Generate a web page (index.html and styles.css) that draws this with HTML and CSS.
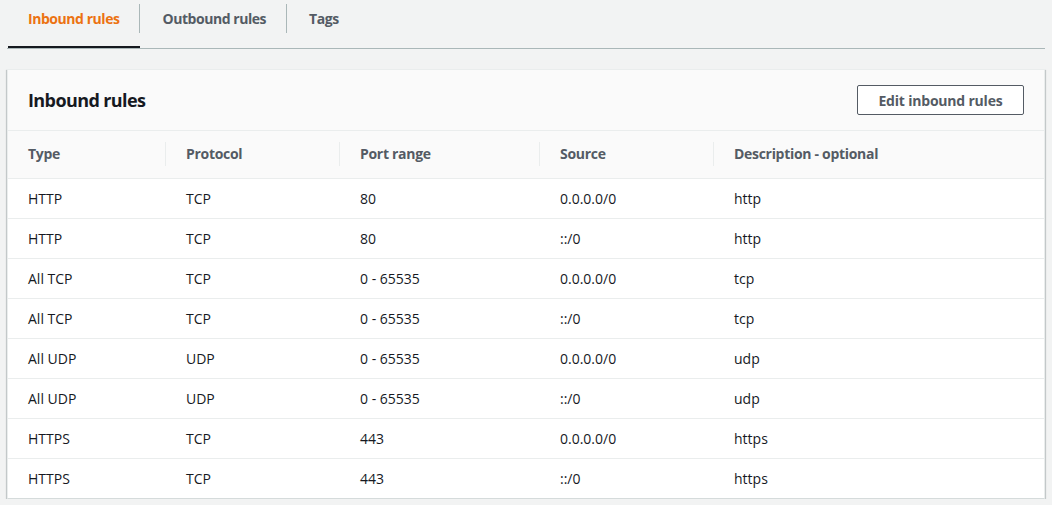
FILE: index.html
```html
<!DOCTYPE html>
<html lang="en">
<head>
<meta charset="utf-8">
<title>Inbound rules</title>
<link rel="stylesheet" href="styles.css">
</head>
<body>
<div class="page">
  <nav class="tabs">
    <div class="tab active"><span class="tab-label">Inbound rules</span></div>
    <div class="tab"><span class="tab-label">Outbound rules</span></div>
    <div class="tab last"><span class="tab-label">Tags</span></div>
  </nav>

  <section class="panel">
    <header class="panel-header">
      <h2 class="panel-title">Inbound rules</h2>
      <button class="btn">Edit inbound rules</button>
    </header>
    <table class="rules">
      <colgroup>
        <col class="c1"><col class="c2"><col class="c3"><col class="c4"><col class="c5">
      </colgroup>
      <thead>
        <tr>
          <th><span class="th-label first">Type</span></th>
          <th><span class="th-label">Protocol</span></th>
          <th><span class="th-label">Port range</span></th>
          <th><span class="th-label">Source</span></th>
          <th><span class="th-label">Description - optional</span></th>
        </tr>
      </thead>
      <tbody>
        <tr><td>HTTP</td><td>TCP</td><td>80</td><td>0.0.0.0/0</td><td>http</td></tr>
        <tr><td>HTTP</td><td>TCP</td><td>80</td><td>::/0</td><td>http</td></tr>
        <tr><td>All TCP</td><td>TCP</td><td>0 - 65535</td><td>0.0.0.0/0</td><td>tcp</td></tr>
        <tr><td>All TCP</td><td>TCP</td><td>0 - 65535</td><td>::/0</td><td>tcp</td></tr>
        <tr><td>All UDP</td><td>UDP</td><td>0 - 65535</td><td>0.0.0.0/0</td><td>udp</td></tr>
        <tr><td>All UDP</td><td>UDP</td><td>0 - 65535</td><td>::/0</td><td>udp</td></tr>
        <tr><td>HTTPS</td><td>TCP</td><td>443</td><td>0.0.0.0/0</td><td>https</td></tr>
        <tr><td>HTTPS</td><td>TCP</td><td>443</td><td>::/0</td><td>https</td></tr>
      </tbody>
    </table>
  </section>
</div>
</body>
</html>
```

FILE: styles.css
```css
* { box-sizing: border-box; }

body {
  margin: 0;
  background: #f2f3f3;
  font-family: "Open Sans", "Noto Sans", sans-serif;
  font-size: 14px;
  color: #16191f;
}

.page {
  padding: 0 7px;
}

.tabs {
  display: flex;
  border-bottom: 1px solid #aab7b8;
  height: 49px;
  padding-left: 1px;
}

.tab {
  height: 48px;
  padding-top: 4px;
  border-bottom: 2px solid transparent;
  font-weight: 700;
  letter-spacing: -0.45px;
  color: #545b64;
}

.tab.active {
  border-bottom-color: #16191f;
  color: #ec7211;
}

.tab-label {
  display: block;
  height: 29px;
  line-height: 29px;
  padding: 0 20px 0 22px;
  border-right: 1px solid #aab7b8;
}

.tab.active .tab-label { padding-left: 20px; }
.tab.last .tab-label { border-right: none; }

.panel {
  margin-top: 20px;
  background: #fff;
  border: 1px solid #eaeded;
  border-bottom-color: #d5dbdb;
  box-shadow: 0 1px 1px 0 rgba(0, 28, 36, 0.3), 1px 1px 1px 0 rgba(0, 28, 36, 0.15), -1px 1px 1px 0 rgba(0, 28, 36, 0.15);
}

.panel-header {
  display: flex;
  align-items: center;
  justify-content: space-between;
  height: 61px;
  padding: 0 20px;
  background: #fafafa;
  border-bottom: 1px solid #eaeded;
}

.panel-title {
  margin: 0;
  font-size: 18px;
  font-weight: 700;
  line-height: 22px;
  letter-spacing: -0.6px;
  color: #16191f;
}

.btn {
  width: 167px;
  height: 30px;
  padding: 0;
  border: 1px solid #545b64;
  border-radius: 2px;
  background: #fff;
  font-family: inherit;
  font-size: 14px;
  font-weight: 700;
  letter-spacing: -0.2px;
  color: #545b64;
}

.rules {
  width: 100%;
  border-collapse: collapse;
  table-layout: fixed;
}

.c1 { width: 157px; }
.c2 { width: 174px; }
.c3 { width: 200px; }
.c4 { width: 174px; }

.rules thead tr {
  background: #fafafa;
  border-bottom: 1px solid #eaeded;
}

.rules th {
  height: 47px;
  padding: 0;
  text-align: left;
  font-weight: 700;
  letter-spacing: -0.3px;
  color: #545b64;
}

.th-label {
  display: block;
  height: 24px;
  line-height: 24px;
  padding-left: 20px;
  border-left: 1px solid #eaeded;
}

.th-label.first {
  border-left: none;
}

.rules td {
  height: 40px;
  padding: 2px 0 0 21px;
  line-height: 20px;
}

.rules td:first-child { padding-left: 20px; }

.rules tbody tr {
  border-bottom: 1px solid #eaeded;
}

.rules tbody tr:last-child { border-bottom: none; }
```
